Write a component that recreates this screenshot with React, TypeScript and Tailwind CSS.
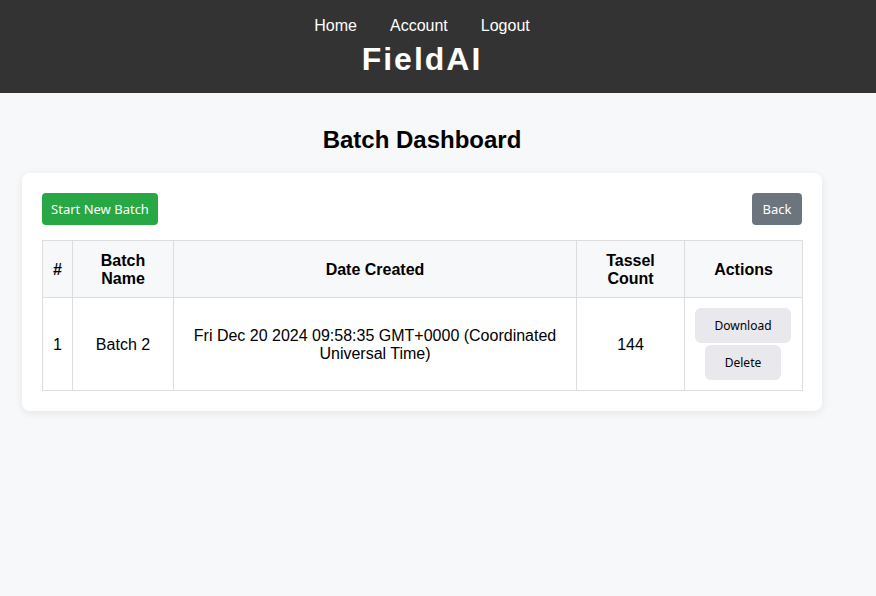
export default function App() {
  return (
    <div className="min-h-[596px] bg-[#f7f8fa] font-['Liberation_Sans',Arial,sans-serif] text-black">
      <header className="bg-[#333333] text-white h-[93px]">
        <div className="w-[844px] flex flex-col items-center pt-[17px]">
          <nav className="flex gap-[33px] text-base leading-[18px]">
            <a>Home</a>
            <a>Account</a>
            <a>Logout</a>
          </nav>
          <div className="mt-[6px] text-[32px] font-bold tracking-[2px] leading-[37px]">FieldAI</div>
        </div>
      </header>

      <main className="ml-[22px] w-[800px]">
        <h1 className="mt-[33px] mb-[19px] text-center text-2xl font-bold leading-[28px]">Batch Dashboard</h1>

        <div className="bg-white rounded-lg shadow-[0_2px_8px_rgba(0,0,0,0.08)] p-5">
          <div className="flex justify-between mb-[15px] font-['Noto_Sans',sans-serif] text-[13px] text-white">
            <button className="bg-[#28a745] rounded h-8 w-[116px] pt-px">Start New Batch</button>
            <button className="bg-[#6c757d] rounded h-8 w-[50px] pt-px">Back</button>
          </div>

          <table className="w-[760px] border-collapse text-base table-fixed">
            <thead>
              <tr className="bg-[#f7f8fa] h-[57px]">
                <th className="w-[30px] border border-[#dddddd] px-[10px] pt-[11px] pb-[9px]">#</th>
                <th className="w-[101px] border border-[#dddddd] px-[10px] pt-[11px] pb-[9px] leading-[18px]">Batch Name</th>
                <th className="w-[403px] border border-[#dddddd] px-[10px] pt-[11px] pb-[9px]">Date Created</th>
                <th className="w-[108px] border border-[#dddddd] px-[10px] pt-[11px] pb-[9px] leading-[18px]">Tassel Count</th>
                <th className="w-[118px] border border-[#dddddd] px-[10px] pt-[11px] pb-[9px]">Actions</th>
              </tr>
            </thead>
            <tbody>
              <tr className="h-[93px] text-center">
                <td className="border border-[#dddddd] px-[10px] pt-[2px]">1</td>
                <td className="border border-[#dddddd] px-[10px] pt-[2px]">Batch 2</td>
                <td className="border border-[#dddddd] px-[10px] pt-[2px] leading-[18px]">
                  Fri Dec 20 2024 09:58:35 GMT+0000 (Coordinated Universal Time)
                </td>
                <td className="border border-[#dddddd] px-[10px] pt-[2px]">144</td>
                <td className="border border-[#dddddd] px-[10px]">
                  <div className="flex flex-col items-center gap-[2px] font-['Noto_Sans',sans-serif] text-[12px] text-black">
                    <button className="bg-[#e8e8ed] rounded-md h-[35px] w-[96px] -ml-px pt-px">Download</button>
                    <button className="bg-[#e8e8ed] rounded-md h-[35px] w-[76px] -ml-px pt-px">Delete</button>
                  </div>
                </td>
              </tr>
            </tbody>
          </table>
        </div>
      </main>
    </div>
  );
}
